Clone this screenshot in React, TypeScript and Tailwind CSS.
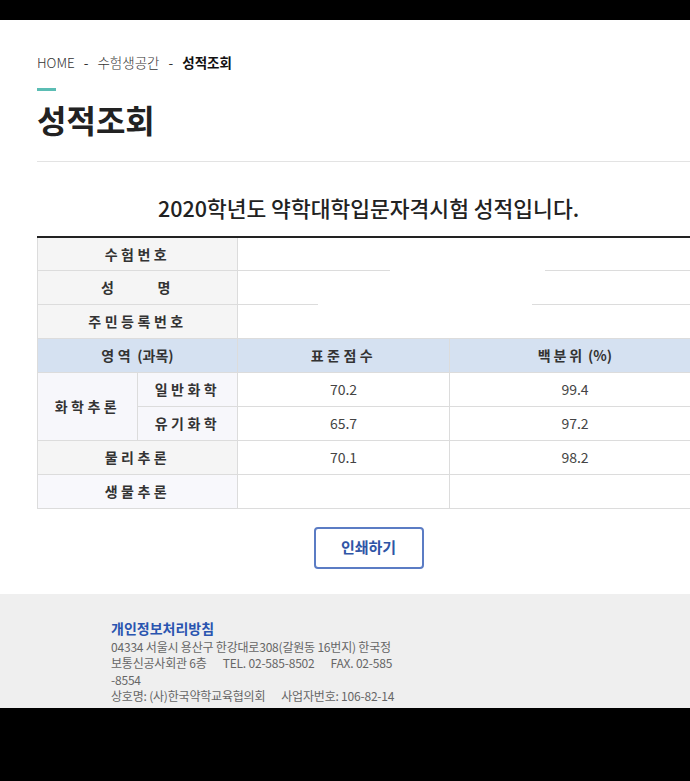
import React from 'react';

const font = { fontFamily: '"Noto Sans CJK KR", "Noto Sans", sans-serif' };

function LabelCell({ children, className = '', colSpan, rowSpan }: { children: React.ReactNode; className?: string; colSpan?: number; rowSpan?: number }) {
    return (
        <td
            colSpan={colSpan}
            rowSpan={rowSpan}
            className={`border border-[#dcdcdc] text-center text-[14px] font-bold tracking-[0.25em] text-[#333] ${className}`}
        >
            {children}
        </td>
    );
}

function ValueCell({ children }: { children?: React.ReactNode }) {
    return <td className="border border-[#dcdcdc] bg-white text-center text-[14px] text-[#444]">{children}</td>;
}

export default function App() {
    const info = ['수험번호', '성      명', '주민등록번호'];

    return (
        <div className="h-[781px] w-[690px] overflow-hidden bg-black" style={font}>
            <div className="mt-[20px] h-[688px] overflow-hidden bg-white">
                <div className="ml-[37px] w-[663px] pt-[32px]">
                    {/* breadcrumb */}
                    <div className="flex h-[20px] items-center text-[13.5px] text-[#333]">
                        <span className="font-light">HOME</span>
                        <span className="mx-[9px]">-</span>
                        <span className="font-light">수험생공간</span>
                        <span className="mx-[9px]">-</span>
                        <span className="font-bold text-[#111]">성적조회</span>
                    </div>
                    <div className="mt-[16px] h-[3px] w-[19px] bg-[#5bbdb4]" />
                    <h1 className="mt-[6px] text-[32px] leading-[44px] font-bold text-[#222]">성적조회</h1>
                    <div className="mt-[20px] h-px w-full bg-[#e3e3e3]" />

                    <h2 className="mt-[31px] text-center text-[21.5px] leading-[30px] font-medium text-[#222]">
                        2020학년도 약학대학입문자격시험 성적입니다.
                    </h2>

                    <table className="mt-[13px] w-[663px] table-fixed border-collapse border-t-2 border-t-[#222]">
                        <colgroup>
                            <col className="w-[100px]" />
                            <col className="w-[100px]" />
                            <col className="w-[212px]" />
                            <col className="w-[251px]" />
                        </colgroup>
                        <tbody>
                            {info.map((label, i) => (
                                <tr key={i} className="h-[33.9px]">
                                    <LabelCell colSpan={2} className="bg-[#f5f5f5] whitespace-pre">
                                        {label}
                                    </LabelCell>
                                    <td colSpan={2} className="relative border border-[#dcdcdc] bg-white">
                                        {/* redacted personal info */}
                                        {i === 0 && <div className="absolute right-[155px] -bottom-[2px] h-[4px] w-[155px] bg-white" />}
                                        {i === 1 && <div className="absolute left-[80px] -bottom-[2px] h-[4px] w-[214px] bg-white" />}
                                    </td>
                                </tr>
                            ))}
                            <tr className="h-[33.9px] bg-[#d5e1f1]">
                                <LabelCell colSpan={2} className="bg-[#d5e1f1] tracking-normal">
                                    <span className="tracking-[0.25em]">영역</span> (과목)
                                </LabelCell>
                                <LabelCell className="bg-[#d5e1f1] tracking-[0.15em]">표준점수</LabelCell>
                                <LabelCell className="bg-[#d5e1f1] tracking-normal">
                                    <span className="tracking-[0.2em]">백분위</span> (%)
                                </LabelCell>
                            </tr>
                            <tr className="h-[33.9px]">
                                <LabelCell rowSpan={2} className="bg-[#f7f7fb]">
                                    화학추론
                                </LabelCell>
                                <LabelCell className="bg-[#f7f7fb]">일반화학</LabelCell>
                                <ValueCell>70.2</ValueCell>
                                <ValueCell>99.4</ValueCell>
                            </tr>
                            <tr className="h-[33.9px]">
                                <LabelCell className="bg-[#f7f7fb]">유기화학</LabelCell>
                                <ValueCell>65.7</ValueCell>
                                <ValueCell>97.2</ValueCell>
                            </tr>
                            <tr className="h-[33.9px]">
                                <LabelCell colSpan={2} className="bg-[#f5f5f5]">
                                    물리추론
                                </LabelCell>
                                <ValueCell>70.1</ValueCell>
                                <ValueCell>98.2</ValueCell>
                            </tr>
                            <tr className="h-[33.9px]">
                                <LabelCell colSpan={2} className="bg-[#f8f8fc]">
                                    생물추론
                                </LabelCell>
                                <ValueCell />
                                <ValueCell />
                            </tr>
                        </tbody>
                    </table>

                    <div className="mt-[18px] flex justify-center">
                        <button className="h-[42px] w-[110px] rounded-[4px] border-2 border-[#5b7cc4] bg-white text-[15px] font-bold text-[#2f55a6]">
                            인쇄하기
                        </button>
                    </div>
                </div>

                <footer className="mt-[25px] h-[200px] bg-[#efefef] pt-[24px] pl-[111px]">
                    <div className="text-[14px] leading-[20px] font-bold text-[#2a55b0]">개인정보처리방침</div>
                    <div className="mt-[1px] text-[12px] leading-[16.5px] tracking-[-0.2px] text-[#666]">
                        <div>04334 서울시 용산구 한강대로308(갈원동 16번지) 한국정</div>
                        <div>
                            보통신공사회관 6층<span className="ml-[16px]">TEL. 02-585-8502</span>
                            <span className="ml-[16px]">FAX. 02-585</span>
                        </div>
                        <div>-8554</div>
                        <div>
                            상호명: (사)한국약학교육협의회<span className="ml-[16px]">사업자번호: 106-82-14</span>
                        </div>
                    </div>
                </footer>
            </div>
        </div>
    );
}
